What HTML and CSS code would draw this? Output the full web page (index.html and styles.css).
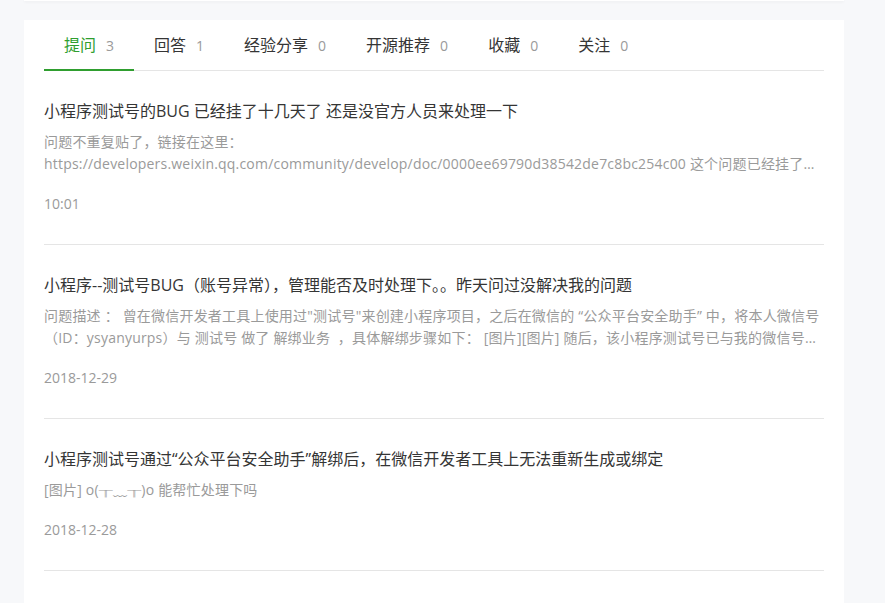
FILE: index.html
```html
<!DOCTYPE html>
<html lang="zh-CN">

<head>
    <meta charset="UTF-8">
    <meta name="viewport" content="width=device-width, initial-scale=1.0">
    <title>我的社区</title>
    <link rel="stylesheet" href="styles.css">
</head>

<body>

    <div class="page">
        <!-- 上方信息卡片 -->
        <div class="top_card"></div>

        <!-- 内容卡片 -->
        <div class="main_card">
            <ul class="tabs">
                <li class="active">提问<span class="num">3</span></li>
                <li>回答<span class="num">1</span></li>
                <li>经验分享<span class="num">0</span></li>
                <li>开源推荐<span class="num">0</span></li>
                <li>收藏<span class="num">0</span></li>
                <li>关注<span class="num">0</span></li>
            </ul>

            <div class="list">
                <div class="item">
                    <h3 class="title">小程序测试号的BUG 已经挂了十几天了 还是没官方人员来处理一下</h3>
                    <p class="desc">问题不重复贴了，链接在这里： https://developers.weixin.qq.com/community/develop/doc/0000ee69790d38542de7c8bc254c00 这个问题已经挂了十几天了，一直没有人处理，希望官方能尽快处理一下。</p>
                    <div class="time">10:01</div>
                </div>

                <div class="item">
                    <h3 class="title">小程序--测试号BUG（账号异常），管理能否及时处理下。。昨天问过没解决我的问题</h3>
                    <p class="desc">问题描述 ： 曾在微信开发者工具上使用过"测试号"来创建小程序项目，之后在微信的 “公众平台安全助手” 中，将本人微信号<br>（ID：ysyanyurps）与 测试号 做了 解绑业务 &nbsp;，具体解绑步骤如下： [图片][图片] 随后，该小程序测试号已与我的微信号脱离绑定关系，但是在开发者工具上无法重新生成。</p>
                    <div class="time">2018-12-29</div>
                </div>

                <div class="item">
                    <h3 class="title">小程序测试号通过“公众平台安全助手”解绑后，在微信开发者工具上无法重新生成或绑定</h3>
                    <p class="desc">[图片] o(╥﹏╥)o 能帮忙处理下吗</p>
                    <div class="time">2018-12-28</div>
                </div>

                <div class="item">
                    <h3 class="title">小程序测试号无法使用</h3>
                    <p class="desc">测试号登录后提示账号异常</p>
                    <div class="time">2018-12-27</div>
                </div>
            </div>
        </div>
    </div>

</body>

</html>
```

FILE: styles.css
```css
* {
    margin: 0;
    padding: 0;
}

li {
    list-style: none;
}

body {
    background: #f7f8fa;
    font-family: "Open Sans", "Noto Sans CJK SC", sans-serif;
    color: #353535;
    overflow: hidden;
}

.page {
    width: 820px;
    padding-left: 24px;
}

.top_card {
    height: 1px;
    background: #ffffff;
    box-shadow: 0 1px 3px rgba(0, 0, 0, 0.08);
}

.main_card {
    margin-top: 19px;
    background: #ffffff;
    padding: 0 20px;
    min-height: 700px;
}

/* 选项卡 */
.tabs {
    display: flex;
    border-bottom: 1px solid #e5e5e5;
    padding-top: 2px;
}

.tabs li {
    padding: 0 20px;
    line-height: 46px;
    font-size: 16px;
    color: #353535;
    border-bottom: 2px solid transparent;
    margin-bottom: -1px;
    cursor: pointer;
}

.tabs li .num {
    margin-left: 10px;
    font-size: 14px;
    color: #9a9a9a;
}

.tabs li.active {
    color: #2f9e2f;
    border-bottom-color: #2f9e2f;
}

/* 列表 */
.list .item {
    padding: 28px 0 29px;
    border-bottom: 1px solid #e5e5e5;
}

.list .item .title {
    font-size: 16px;
    font-weight: normal;
    line-height: 24px;
    color: #353535;
}

.list .item .desc {
    margin-top: 8px;
    font-size: 14px;
    line-height: 22px;
    color: #9a9a9a;
    letter-spacing: 0.2px;
    overflow: hidden;
    display: -webkit-box;
    -webkit-line-clamp: 2;
    -webkit-box-orient: vertical;
}

.list .item .time {
    margin-top: 18px;
    font-size: 14px;
    line-height: 22px;
    color: #9a9a9a;
}
```
